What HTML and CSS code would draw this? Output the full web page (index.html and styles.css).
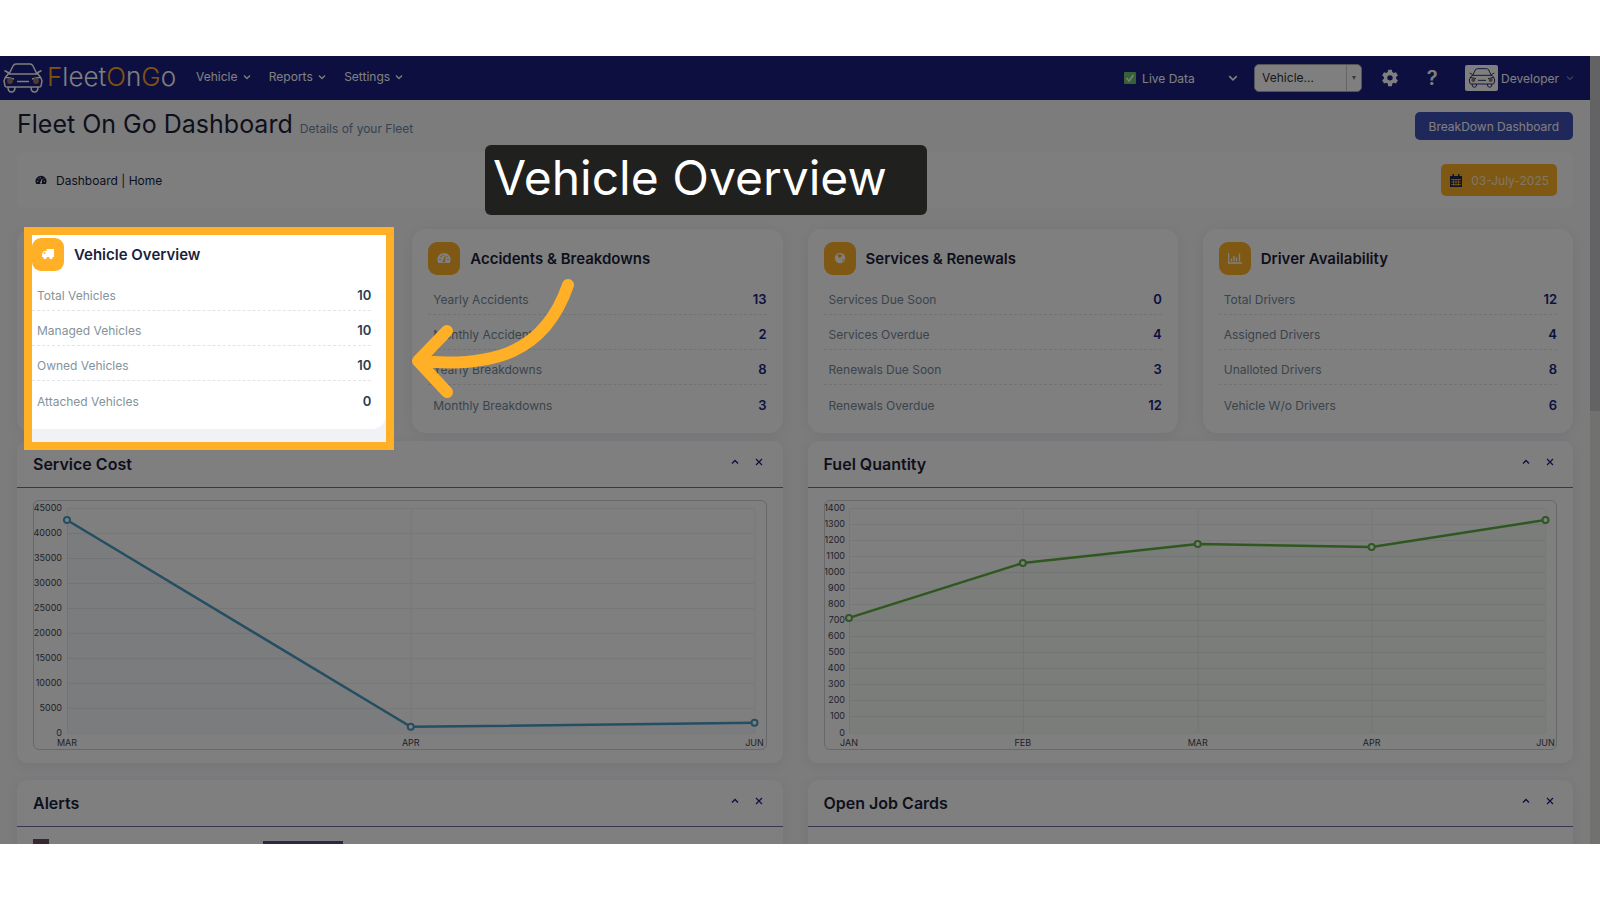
FILE: index.html
```html
<!DOCTYPE html>
<html lang="en">
  <head>
    <meta charset="UTF-8" />
    <meta name="viewport" content="width=device-width, initial-scale=1.0" />
    <title>Fleet On Go Dashboard</title>
    <link rel="stylesheet" href="styles.css">
  </head>
  <body>
    <!-- shared icons -->
    <svg class="sprite" aria-hidden="true">
      <symbol id="chevron" viewBox="0 0 8 8"><path d="M1 2.5l3 3 3-3" fill="none" stroke="currentColor" stroke-width="1.3" /></symbol>
      <symbol id="up" viewBox="0 0 8 8"><path d="M1 5.5l3-3 3 3" fill="none" stroke="currentColor" stroke-width="1.4" /></symbol>
      <symbol id="close" viewBox="0 0 8 8"><path d="M1 1l6 6M7 1L1 7" fill="none" stroke="currentColor" stroke-width="1.2" /></symbol>
      <symbol id="gauge" viewBox="0 0 14 12">
        <path d="M7 1a6.5 6.5 0 0 0-5.6 9.9h11.2A6.5 6.5 0 0 0 7 1z" fill="currentColor" />
        <path class="cut" d="M7 9.5L8.2 4.5M2.2 7.5h1.6M3.5 4.2l1 1M6 2.5v1.4M10.2 7.5h1.6M10.5 4.2l-.7.7" fill="none" stroke-width="1.2" />
        <circle class="cut-dot" cx="7" cy="9.2" r="1.3" />
      </symbol>
      <symbol id="car" viewBox="0 0 40 30">
        <path d="M6 11l4-8q1-2 3-2h14q2 0 3 2l4 8M6 10L1.500 7.500M34 10l4.500-2.500M5 11h30l3 4 1 3-1 5q0 1-2 1H4q-2 0-2-1l-1-5 1-3zM2 14l9 2M38 14l-9 2M14 18.500h12M5 24q0 5 3.500 5t3.500-5M28 24q0 5 3.500 5t3.500-5" fill="none" stroke="currentColor" stroke-width="1.5" />
        <circle class="lamp" cx="7" cy="18" r="3" />
        <circle class="lamp" cx="33" cy="18" r="3" />
      </symbol>
    </svg>

    <div class="app">
      <div class="page">
        <header class="navbar">
          <a class="logo" href="#">
            <svg class="logo-car"><use href="#car" /></svg>
            <span><b>F</b>leet<b>O</b>n<b>G</b>o</span>
          </a>
          <nav class="menu">
            <a href="#">Vehicle <svg class="chev"><use href="#chevron" /></svg></a>
            <a href="#">Reports <svg class="chev"><use href="#chevron" /></svg></a>
            <a href="#">Settings <svg class="chev"><use href="#chevron" /></svg></a>
          </nav>
          <div class="tools">
            <div class="live">
              <svg class="check" viewBox="0 0 12 12"><rect width="12" height="12" rx="1" fill="#6cc46a" /><path d="M2.5 6l2.500 3 4.500-6" fill="none" stroke="#fff" stroke-width="1.4" /></svg>
              <select aria-label="Data source"><option>Live Data</option></select>
              <svg class="live-chev"><use href="#chevron" /></svg>
            </div>
            <div class="picker">
              <select aria-label="Vehicle"><option>Vehicle...</option></select>
              <span class="picker-arrow"></span>
            </div>
            <button class="icon-btn" aria-label="Configuration">
              <svg width="18" height="18" viewBox="0 0 24 24" fill="currentColor"><path fill-rule="evenodd" d="M9.5 1h5l.6 3.1 1.900 1.100 3-1 2.500 4.300-2.400 2.100v2.300l2.400 2.100-2.500 4.300-3-1-1.900 1.100-.6 3.600h-5l-.6-3.600L7 18.300l-3 1L1.500 15l2.400-2.100v-2.300L1.500 8.500 4 4.200l3 1 1.900-1.100zM12 8.200a3.600 3.600 0 1 0 0 7.200 3.600 3.600 0 0 0 0-7.200z" /></svg>
            </button>
            <button class="icon-btn help" aria-label="Help">?</button>
            <a class="user" href="#">
              <span class="avatar"><svg><use href="#car" /></svg></span>
              Developer
              <svg class="chev user-chev"><use href="#chevron" /></svg>
            </a>
          </div>
        </header>

        <main class="content">
          <div class="heading">
            <h1>Fleet On Go Dashboard <small>Details of your Fleet</small></h1>
            <button class="btn-breakdown">BreakDown Dashboard</button>
          </div>

          <div class="breadcrumb">
            <svg class="crumb-icon"><use href="#gauge" /></svg>
            <span>Dashboard | Home</span>
            <button class="btn-date">
              <svg width="12" height="13" viewBox="0 0 12 13"><path d="M0 2h12v11H0zM2.500 0h1.500v3H2.500zM8 0h1.500v3H8z" fill="#20264f" /><path d="M1 5.500h10M1 8h10M1 10.500h10M3.500 5v7M6 5v7M8.500 5v7" stroke="#ffb026" stroke-width=".8" /></svg>
              03-July-2025
            </button>
          </div>

          <div class="cards">
            <section class="card">
              <div class="spotlight">
                <div class="spot-card">
                  <h2><span class="badge"><svg viewBox="0 0 14 12" fill="currentColor"><path d="M5.500 1H13v8H1V5.500L3 3h2.500z" /><path d="M2 5.700L3.500 4h1v1.700z" fill="#ffb026" /><circle cx="4" cy="9.500" r="1.700" /><circle cx="10" cy="9.500" r="1.700" /></svg></span>Vehicle Overview</h2>
                  <dl>
                    <div><dt>Total Vehicles</dt><dd>10</dd></div>
                    <div><dt>Managed Vehicles</dt><dd>10</dd></div>
                    <div><dt>Owned Vehicles</dt><dd>10</dd></div>
                    <div><dt>Attached Vehicles</dt><dd>0</dd></div>
                  </dl>
                </div>
              </div>
              <svg class="arrow" viewBox="0 0 170 124"><path d="M158 8C135 75 85 91 8 84M37 54L8 84l29 31" /></svg>
            </section>

            <section class="card">
              <h2><span class="badge"><svg><use href="#gauge" /></svg></span>Accidents &amp; Breakdowns</h2>
              <dl>
                <div><dt>Yearly Accidents</dt><dd>13</dd></div>
                <div><dt>Monthly Accidents</dt><dd>2</dd></div>
                <div><dt>Yearly Breakdowns</dt><dd>8</dd></div>
                <div><dt>Monthly Breakdowns</dt><dd>3</dd></div>
              </dl>
            </section>

            <section class="card">
              <h2><span class="badge"><svg viewBox="0 0 14 12"><circle cx="7" cy="6" r="5.2" fill="currentColor" /><path d="M4 3l3-1 2 1.500-1 1.500-2 1zM9 8l2-1-1 2.500z" fill="#ffb026" /></svg></span>Services &amp; Renewals</h2>
              <dl>
                <div><dt>Services Due Soon</dt><dd>0</dd></div>
                <div><dt>Services Overdue</dt><dd>4</dd></div>
                <div><dt>Renewals Due Soon</dt><dd>3</dd></div>
                <div><dt>Renewals Overdue</dt><dd>12</dd></div>
              </dl>
            </section>

            <section class="card">
              <h2><span class="badge"><svg viewBox="0 0 14 12"><path d="M.5 1v10H14M3.500 9.500v-3M6 9.500V4M8.500 9.500V5.500M11.500 9.500V1.500" fill="none" stroke="currentColor" stroke-width="1.4" /></svg></span>Driver Availability</h2>
              <dl>
                <div><dt>Total Drivers</dt><dd>12</dd></div>
                <div><dt>Assigned Drivers</dt><dd>4</dd></div>
                <div><dt>Unalloted Drivers</dt><dd>8</dd></div>
                <div><dt>Vehicle W/o Drivers</dt><dd>6</dd></div>
              </dl>
            </section>
          </div>

          <div class="panels">
            <section class="panel">
              <div class="panel-head">
                <h2>Service Cost</h2>
                <button aria-label="Collapse"><svg><use href="#up" /></svg></button>
                <button aria-label="Close"><svg><use href="#close" /></svg></button>
              </div>
              <div class="panel-body">
                <svg class="chart blue" viewBox="0 0 732 248">
                  <path class="grid" d="M33 7.5H721M33 32.5H721M33 57.5H721M33 82.5H721M33 107.5H721M33 132.5H721M33 157.5H721M33 182.5H721M33 207.5H721M33 232.5H721M33.5 7V232M377.5 7V232M721.5 7V232" />
                  <path class="area" d="M33 19L377 226L721 222V232H33z" />
                  <path class="line" d="M33 19L377 226L721 222" />
                  <circle cx="33" cy="19" r="3" /><circle cx="377" cy="226" r="3" /><circle cx="721" cy="222" r="3" />
                  <g class="y-labels">
                    <text x="28" y="10">45000</text><text x="28" y="35">40000</text><text x="28" y="60">35000</text><text x="28" y="85">30000</text><text x="28" y="110">25000</text><text x="28" y="135">20000</text><text x="28" y="160">15000</text><text x="28" y="185">10000</text><text x="28" y="210">5000</text><text x="28" y="235">0</text>
                  </g>
                  <g class="x-labels"><text x="33" y="245">MAR</text><text x="377" y="245">APR</text><text x="721" y="245">JUN</text></g>
                </svg>
              </div>
            </section>

            <section class="panel">
              <div class="panel-head">
                <h2>Fuel Quantity</h2>
                <button aria-label="Collapse"><svg><use href="#up" /></svg></button>
                <button aria-label="Close"><svg><use href="#close" /></svg></button>
              </div>
              <div class="panel-body">
                <svg class="chart green" viewBox="0 0 732 248">
                  <path class="grid" d="M24 7.5H721M24 23.5H721M24 39.5H721M24 55.5H721M24 71.5H721M24 87.5H721M24 103.5H721M24 119.5H721M24 135.5H721M24 151.5H721M24 167.5H721M24 183.5H721M24 199.5H721M24 215.5H721M24 232.5H721M24.5 7V232M198.5 7V232M373.5 7V232M547.5 7V232M721.5 7V232" />
                  <path class="area" d="M24 117L198 62L373 43L547 46L721 19V232H24z" />
                  <path class="line" d="M24 117L198 62L373 43L547 46L721 19" />
                  <circle cx="24" cy="117" r="3" /><circle cx="198" cy="62" r="3" /><circle cx="373" cy="43" r="3" /><circle cx="547" cy="46" r="3" /><circle cx="721" cy="19" r="3" />
                  <g class="y-labels">
                    <text x="20" y="10">1400</text><text x="20" y="26">1300</text><text x="20" y="42">1200</text><text x="20" y="58">1100</text><text x="20" y="74">1000</text><text x="20" y="90">900</text><text x="20" y="106">800</text><text x="20" y="122">700</text><text x="20" y="138">600</text><text x="20" y="154">500</text><text x="20" y="170">400</text><text x="20" y="186">300</text><text x="20" y="202">200</text><text x="20" y="218">100</text><text x="20" y="235">0</text>
                  </g>
                  <g class="x-labels"><text x="24" y="245">JAN</text><text x="198" y="245">FEB</text><text x="373" y="245">MAR</text><text x="547" y="245">APR</text><text x="721" y="245">JUN</text></g>
                </svg>
              </div>
            </section>

            <section class="panel">
              <div class="panel-head">
                <h2>Alerts</h2>
                <button aria-label="Collapse"><svg><use href="#up" /></svg></button>
                <button aria-label="Close"><svg><use href="#close" /></svg></button>
              </div>
              <div class="panel-body alerts">
                <span class="alert-icon"></span>
                <span class="alert-tab"></span>
              </div>
            </section>

            <section class="panel">
              <div class="panel-head">
                <h2>Open Job Cards</h2>
                <button aria-label="Collapse"><svg><use href="#up" /></svg></button>
                <button aria-label="Close"><svg><use href="#close" /></svg></button>
              </div>
              <div class="panel-body"></div>
            </section>
          </div>
        </main>
      </div>
      <div class="scrollbar"><div class="thumb"></div></div>

      <div class="dim"></div>
      <div class="callout">Vehicle Overview</div>
    </div>
  </body>
</html>
```
FILE: styles.css
```css
* {
  box-sizing: border-box;
}
body {
  margin: 0;
  padding: 56px 0;
  height: 100vh;
  background: #fff;
  font-family: Inter, "Open Sans", sans-serif;
  font-size: 12px;
  color: #1c1f3a;
}
h1, h2, dl, dd {
  margin: 0;
}
button, select {
  font: inherit;
  border: 0;
  cursor: pointer;
}
a {
  color: inherit;
  text-decoration: none;
}
.sprite {
  position: absolute;
  width: 0;
  height: 0;
}
.app {
  position: relative;
  display: flex;
  height: 100%;
  overflow: hidden;
  background: #f8f8fa;
}
.page {
  flex: 1;
  min-width: 0;
}
.scrollbar {
  width: 10px;
  background: #e2e5e0;
}
.thumb {
  height: 45%;
  background: #c6c7ca;
}
.dim {
  position: absolute;
  inset: 0;
  z-index: 5;
  background: rgba(0, 0, 0, 0.5);
}

/* top bar */
.navbar {
  display: flex;
  align-items: center;
  height: 44px;
  padding: 0 16px 0 3px;
  background: #1a1f80;
  color: #fff;
}
.logo {
  display: flex;
  align-items: center;
  gap: 4px;
  width: 193px;
  font-size: 26px;
  line-height: 30px;
  font-weight: 300;
}
.logo span {
  padding-bottom: 2px;
}
.logo b {
  font-weight: 300;
  color: #ffa81c;
}
.logo-car {
  width: 40px;
  height: 30px;
}
.lamp {
  fill: #9a7560;
}
.menu {
  display: flex;
  flex: 1;
  gap: 18px;
  padding-bottom: 3px;
}
.chev {
  width: 8px;
  height: 8px;
  margin-left: 2px;
}
.tools {
  display: flex;
  align-items: center;
}
.live {
  position: relative;
  display: flex;
  align-items: center;
  gap: 6px;
  width: 130px;
}
.check {
  width: 12px;
  height: 12px;
}
.live select {
  flex: 1;
  padding: 0;
  appearance: none;
  background: none;
  color: #fff;
}
.live-chev {
  position: absolute;
  right: 16px;
  width: 10px;
  height: 10px;
  pointer-events: none;
}
.picker {
  position: relative;
  width: 108px;
  height: 28px;
}
.picker select {
  width: 100%;
  height: 100%;
  padding: 0 7px 2px;
  appearance: none;
  border: 1px solid #aaa;
  border-radius: 5px;
  background: #fff;
  color: #333;
}
.picker-arrow {
  position: absolute;
  top: 1px;
  right: 1px;
  bottom: 1px;
  width: 15px;
  border-left: 1px solid #ccc;
  pointer-events: none;
}
.picker-arrow::after {
  content: "";
  position: absolute;
  top: 11px;
  left: 5px;
  border: 2px solid transparent;
  border-top: 4px solid #777;
}
.icon-btn {
  width: 18px;
  height: 18px;
  margin-left: 19px;
  padding: 0;
  background: none;
  color: #fff;
}
.help {
  margin-left: 24px;
  font-size: 20px;
  font-weight: 600;
  line-height: 18px;
}
.user {
  display: flex;
  align-items: center;
  gap: 3px;
  margin-left: 24px;
}
.avatar {
  display: flex;
  align-items: center;
  justify-content: center;
  width: 33px;
  height: 26px;
  border-radius: 2px;
  background: #fff;
  color: #2b3270;
}
.avatar svg {
  width: 28px;
  height: 20px;
}
.avatar .lamp {
  fill: #ffb026;
}
.user-chev {
  margin-left: 4px;
  opacity: 0.4;
}

/* heading and breadcrumb */
.content {
  padding: 12px 17px;
}
.heading {
  display: flex;
  align-items: center;
  justify-content: space-between;
  height: 28px;
}
.heading h1 {
  font-size: 25px;
  line-height: 28px;
  font-weight: 400;
}
.heading small {
  font-size: 12px;
  color: #6f87a0;
}
.btn-breakdown {
  height: 28px;
  padding: 0 14px;
  border-radius: 5px;
  background: #3f51b5;
  color: #fff;
}
.breadcrumb {
  display: flex;
  align-items: center;
  gap: 9px;
  height: 56px;
  margin-top: 12px;
  padding: 0 16px 0 18px;
  border-radius: 6px;
  background: #fcfcfd;
}
.crumb-icon {
  width: 12px;
  height: 10px;
  --cut: #fff;
}
.cut {
  stroke: var(--cut);
}
.cut-dot {
  fill: var(--cut);
}
.btn-date {
  display: flex;
  align-items: center;
  gap: 9px;
  height: 32px;
  margin-left: auto;
  padding: 0 8px 0 9px;
  border-radius: 5px;
  background: #ffb026;
  color: #ffeecb;
}

/* summary cards */
.cards {
  display: grid;
  grid-template-columns: repeat(4, 1fr);
  gap: 25px;
  margin-top: 21px;
}
.card {
  position: relative;
  height: 204px;
  padding: 12px 16px;
  border-radius: 14px;
  background: #fff;
  box-shadow: 0 2px 12px rgba(40, 50, 90, 0.08);
}
.card h2 {
  display: flex;
  align-items: center;
  gap: 10px;
  height: 34px;
  font-size: 15px;
  font-weight: 600;
}
.badge {
  display: flex;
  align-items: center;
  justify-content: center;
  width: 32px;
  height: 33px;
  border-radius: 9px;
  background: #ffb026;
  color: #fff;
  --cut: #ffb026;
}
.badge svg {
  width: 14px;
  height: 12px;
}
.card dl {
  padding-top: 5px;
}
.card dl div {
  display: flex;
  align-items: flex-end;
  justify-content: space-between;
  height: 35px;
  padding: 0 0 7px 5px;
  border-bottom: 1px dashed #e3e4e8;
}
.card dl div:last-child {
  border-bottom: 0;
}
.card dt {
  color: #73899b;
}
.card dd {
  font-size: 13px;
  font-weight: 600;
  color: #1a237e;
}

/* highlighted card of the tour */
.spotlight {
  position: absolute;
  top: -2px;
  left: 7px;
  z-index: 6;
  width: 100%;
  height: 223px;
  border: 8px solid #ffb026;
  background: #f1f2f5;
}
.spot-card {
  height: 194px;
  padding: 2px 15px 0 0;
  border-radius: 0 0 14px 0;
  background: #fff;
}
.spot-card dt {
  color: #83939c;
}
.spot-card dd {
  color: #2c3e50;
}
.arrow {
  position: absolute;
  top: 48px;
  left: calc(100% + 23px);
  z-index: 6;
  width: 170px;
  height: 124px;
  fill: none;
  stroke: #ffb026;
  stroke-width: 12;
  stroke-linecap: round;
  stroke-linejoin: round;
}
.callout {
  position: absolute;
  top: 89px;
  left: 485px;
  z-index: 7;
  width: 442px;
  height: 70px;
  padding-left: 8px;
  border-radius: 6px;
  background: #20201e;
  color: #fff;
  font-size: 48px;
  line-height: 66px;
  white-space: nowrap;
}

/* panels */
.panels {
  display: grid;
  grid-template-columns: repeat(2, 1fr);
  gap: 17px 25px;
  margin-top: 8px;
}
.panel {
  border-radius: 10px;
  background: #fff;
  box-shadow: 0 2px 12px rgba(40, 50, 90, 0.08);
}
.panel-head {
  display: flex;
  align-items: center;
  gap: 8px;
  height: 47px;
  padding: 0 15px 0 16px;
  border-bottom: 1px solid #6a70a0;
}
.panel-head h2 {
  flex: 1;
  font-size: 16px;
  font-weight: 600;
}
.panel-head button {
  display: flex;
  align-items: center;
  justify-content: center;
  width: 16px;
  height: 20px;
  padding: 0 1px 4px 0;
  background: none;
  color: #1a237e;
}
.panel-head button svg {
  width: 8px;
  height: 8px;
}
.panel-body {
  padding: 12px 16px 13px;
}
.chart {
  display: block;
  width: 100%;
  border: 1px solid #cdd0d8;
  border-radius: 6px;
  font-size: 9px;
  fill: #45454f;
}
.grid {
  stroke: #f0f0f2;
  fill: none;
}
.line {
  fill: none;
  stroke-width: 2.5;
}
.chart circle {
  fill: #fff;
  stroke-width: 2;
}
.blue .line,
.blue circle {
  stroke: #4a9cc4;
}
.blue .area {
  fill: rgba(90, 130, 180, 0.06);
}
.green .line,
.green circle {
  stroke: #5cb040;
}
.green .area {
  fill: rgba(100, 170, 90, 0.06);
}
.y-labels {
  text-anchor: end;
}
.x-labels {
  text-anchor: middle;
}
.alerts {
  display: flex;
  gap: 214px;
}
.alert-icon {
  width: 16px;
  height: 16px;
  background: #6d4f66;
}
.alert-tab {
  width: 80px;
  height: 24px;
  margin-top: 2px;
  background: #5a4a86;
}
```
